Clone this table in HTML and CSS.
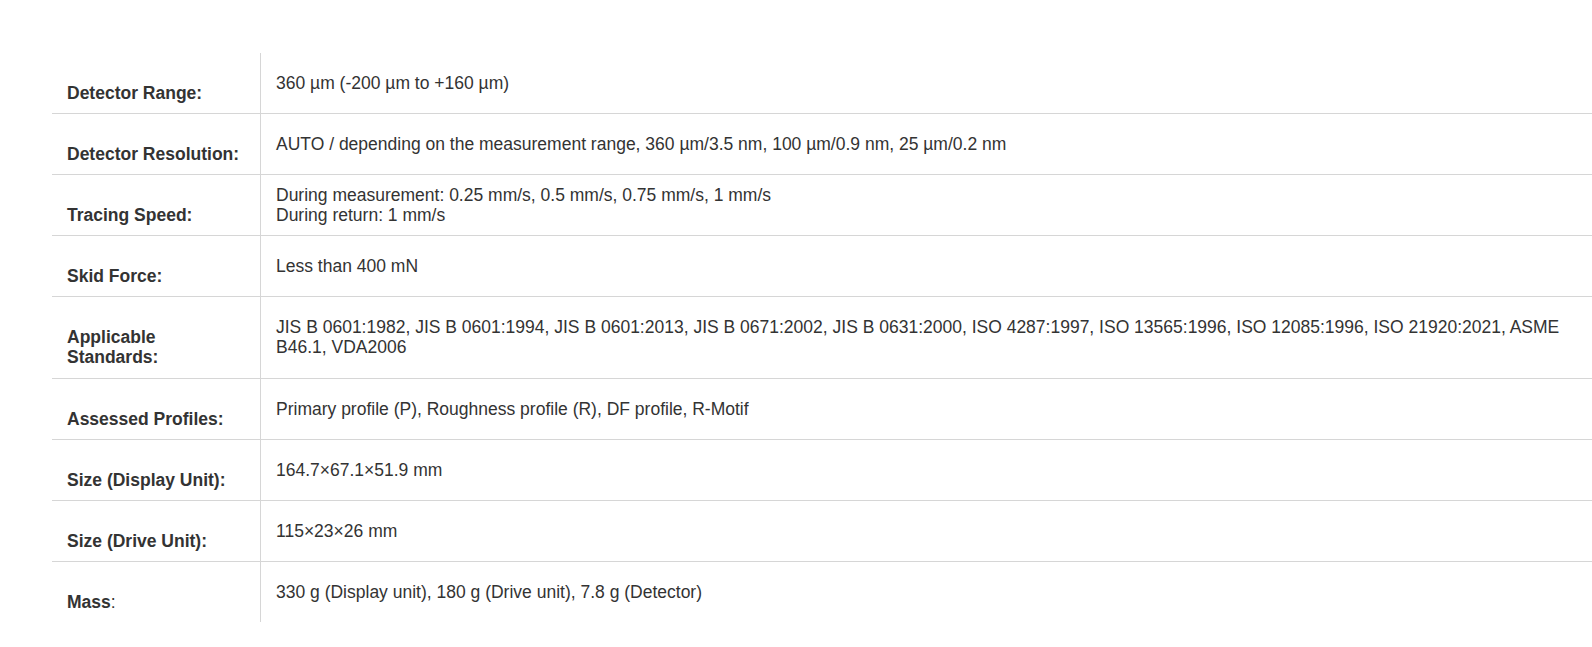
FILE: index.html
```html
<!DOCTYPE html>
<html lang="en">
<head>
<meta charset="utf-8">
<title>Specifications</title>
<link rel="stylesheet" href="styles.css">
</head>
<body>
<div class="spec-wrap">
  <table class="spec-table">
    <tbody>
      <tr>
        <th><strong>Detector Range:</strong></th>
        <td>360 µm (-200 µm to +160 µm)</td>
      </tr>
      <tr>
        <th><strong>Detector Resolution:</strong></th>
        <td>AUTO / depending on the measurement range, 360 µm/3.5 nm, 100 µm/0.9 nm, 25 µm/0.2 nm</td>
      </tr>
      <tr>
        <th><strong>Tracing Speed:</strong></th>
        <td>During measurement: 0.25 mm/s, 0.5 mm/s, 0.75 mm/s, 1 mm/s<br>During return: 1 mm/s</td>
      </tr>
      <tr>
        <th><strong>Skid Force:</strong></th>
        <td>Less than 400 mN</td>
      </tr>
      <tr>
        <th><strong>Applicable Standards:</strong></th>
        <td>JIS B 0601:1982, JIS B 0601:1994, JIS B 0601:2013, JIS B 0671:2002, JIS B 0631:2000, ISO 4287:1997, ISO 13565:1996, ISO 12085:1996, ISO 21920:2021, ASME B46.1, VDA2006</td>
      </tr>
      <tr>
        <th><strong>Assessed Profiles:</strong></th>
        <td>Primary profile (P), Roughness profile (R), DF profile, R-Motif</td>
      </tr>
      <tr>
        <th><strong>Size (Display Unit):</strong></th>
        <td>164.7×67.1×51.9 mm</td>
      </tr>
      <tr>
        <th><strong>Size (Drive Unit):</strong></th>
        <td>115×23×26 mm</td>
      </tr>
      <tr>
        <th><strong>Mass</strong>:</th>
        <td>330 g (Display unit), 180 g (Drive unit), 7.8 g (Detector)</td>
      </tr>
    </tbody>
  </table>
</div>
</body>
</html>
```
FILE: styles.css
```css
html, body {
  margin: 0;
  padding: 0;
  background: #ffffff;
}

body {
  font-family: "Liberation Sans", Arial, sans-serif;
  font-size: 17.5px;
  line-height: 20.1px;
  color: #333333;
}

.spec-wrap {
  padding: 53px 0 0 52px;
}

.spec-table {
  width: 100%;
  border-collapse: collapse;
  border-spacing: 0;
}

.spec-table tr {
  border-bottom: 1px solid #d6d6d6;
}

.spec-table tr:last-child {
  border-bottom: none;
}

.spec-table th {
  width: 178px;
  text-align: left;
  vertical-align: middle;
  padding: 30px 15px 10px 15px;
  font-weight: normal;
  border-right: 1px solid #d6d6d6;
}

.spec-table th strong {
  font-weight: bold;
}

.spec-table td {
  vertical-align: middle;
  padding: 0 15px;
}
```
